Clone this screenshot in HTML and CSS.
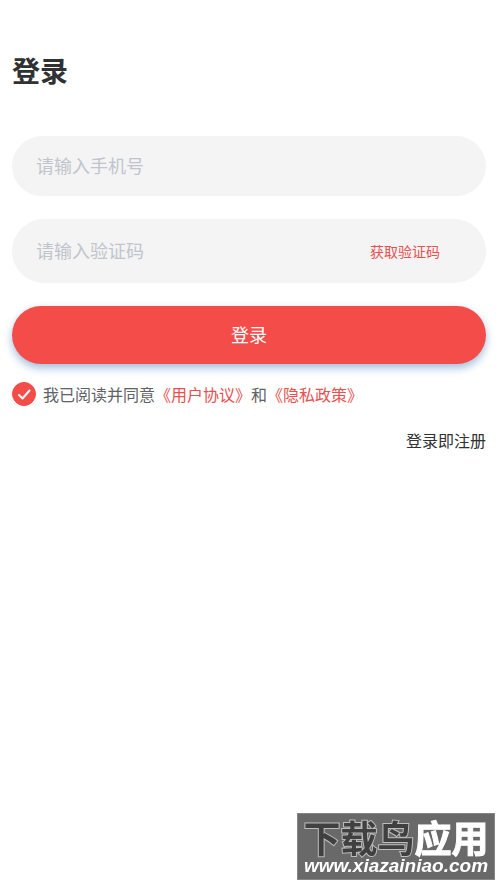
FILE: index.html
```html
<!DOCTYPE html>
<html lang="zh-CN">
<head>
<meta charset="utf-8">
<meta name="viewport" content="width=device-width, initial-scale=1">
<title>登录</title>
<link rel="stylesheet" href="styles.css">
</head>
<body>
<main class="page">
  <h1 class="title">登录</h1>
  <form class="form">
    <div class="field">
      <input class="field-input" type="tel" placeholder="请输入手机号" aria-label="手机号">
    </div>
    <div class="field field-code">
      <input class="field-input" type="text" placeholder="请输入验证码" aria-label="验证码">
      <button class="code-button" type="button">获取验证码</button>
    </div>
    <button class="submit" type="submit">登录</button>
  </form>
  <div class="agreement">
    <input class="check" type="checkbox" id="agree" checked>
    <svg class="tick" viewBox="0 0 24 24" aria-hidden="true"><path d="M7 13l3.500 3.500L17.500 8.500"/></svg>
    <p class="agreement-text"><label for="agree">我已阅读并同意</label><a href="#terms">《用户协议》</a>和<a href="#privacy">《隐私政策》</a></p>
  </div>
  <p class="note">登录即注册</p>
</main>
<aside class="watermark">
  <div class="mark-name"><span class="mark-dark">下载鸟</span><span class="mark-light">应用</span></div>
  <div class="mark-url">www.xiazainiao.com</div>
</aside>
</body>
</html>
```
FILE: styles.css
```css
* {
  box-sizing: border-box;
}

body {
  margin: 0;
  min-height: 100vh;
  background: #fff;
  color: #303133;
  font-family: "Noto Sans CJK SC", sans-serif;
  font-size: 16px;
  line-height: 24px;
}

button,
input {
  font: inherit;
}

.page {
  padding: 50px 12px 24px;
}

.title {
  margin: 0 0 46px;
  font-size: 28px;
  line-height: 40px;
  font-weight: 700;
}

.form {
  display: flex;
  flex-direction: column;
  gap: 23px;
}

.field {
  display: flex;
  align-items: center;
  height: 60px;
  padding: 0 24px;
  border-radius: 32px;
  background: #f4f4f4;
}

.field-code {
  height: 64px;
  padding-right: 46px;
}

.field-input {
  flex: 1;
  min-width: 0;
  height: 100%;
  padding: 0 0 2px;
  border: 0;
  outline: 0;
  background: transparent;
  color: #303133;
  font-size: 18px;
}

.field-input::placeholder {
  color: #c0c4cc;
  opacity: 1;
}

.code-button {
  padding: 0;
  border: 0;
  background: transparent;
  color: #e85050;
  font-size: 14px;
}

.submit {
  height: 58px;
  padding: 0 0 2px;
  border: 0;
  border-radius: 32px;
  background: #f44c49;
  box-shadow: 0 4px 8px rgba(45, 110, 175, 0.45);
  color: #fff;
  font-size: 18px;
}

.agreement {
  display: grid;
  grid-template-columns: 24px 1fr;
  align-items: center;
  column-gap: 7px;
  margin-top: 18px;
  color: #606266;
}

.check,
.tick {
  grid-area: 1 / 1;
  width: 24px;
  height: 24px;
}

.check {
  appearance: none;
  margin: 0;
  border: 1px solid #c0c4cc;
  border-radius: 50%;
}

.check:checked {
  border-color: #f44c49;
  background: #f44c49;
}

.tick {
  fill: none;
  stroke: #fff;
  stroke-width: 2;
  stroke-linecap: round;
  stroke-linejoin: round;
  pointer-events: none;
}

.agreement-text {
  margin: 0;
}

.agreement a {
  color: #e85050;
  text-decoration: none;
}

.note {
  margin: 22px 0 0;
  text-align: right;
}

.watermark {
  position: fixed;
  right: 3px;
  bottom: 3px;
  display: flex;
  flex-direction: column;
  align-items: center;
  width: 198px;
  padding: 5px 0 2px;
  border: 1px solid #858585;
  background: #696969;
  white-space: nowrap;
}

.mark-name {
  display: flex;
  font-size: 37px;
  line-height: 36px;
  font-weight: 700;
  paint-order: stroke fill;
}

.mark-dark {
  color: #404040;
  -webkit-text-stroke: 2px #bdbdbd;
}

.mark-light {
  color: #fff;
  -webkit-text-stroke: 1px #fff;
}

.mark-url {
  color: #fff;
  font-family: "Liberation Sans", sans-serif;
  font-size: 19px;
  line-height: 22px;
  font-weight: 700;
  font-style: italic;
}
```
